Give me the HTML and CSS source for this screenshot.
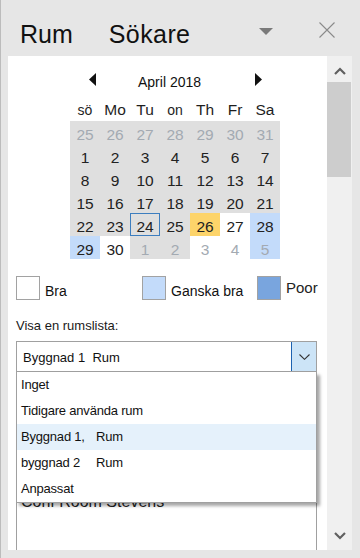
FILE: index.html
```html
<!DOCTYPE html>
<html lang="sv">
<head>
<meta charset="utf-8">
<title>Rum Sökare</title>
<link rel="stylesheet" href="styles.css">
</head>
<body>
<div class="app">
  <header class="top">
    <span class="title t1">Rum</span>
    <span class="title t2">Sökare</span>
    <svg class="menu-tri" width="14" height="7" viewBox="0 0 14 7"><polygon points="0,0 14,0 7,7" fill="#7a7a7a"/></svg>
    <svg class="close" width="16" height="16" viewBox="0 0 16 16"><path d="M0.5 0.5 L15.5 15.5 M15.5 0.5 L0.5 15.5" stroke="#8a8a8a" stroke-width="1.1" fill="none"/></svg>
  </header>
  <div class="main">
    <div class="panel">
      <div class="cal">
        <div class="cal-nav">
          <svg class="arrow arrow-l" width="7" height="13" viewBox="0 0 7 13"><polygon points="7,0 7,13 0,6.5" fill="#111"/></svg>
          <span class="cal-title">April 2018</span>
          <svg class="arrow arrow-r" width="7" height="13" viewBox="0 0 7 13"><polygon points="0,0 0,13 7,6.5" fill="#111"/></svg>
        </div>
        <div class="cal-grid">
          <span class="dh dh-s">sö</span><span class="dh">Mo</span><span class="dh">Tu</span><span class="dh dh-s">on</span><span class="dh">Th</span><span class="dh">Fr</span><span class="dh">Sa</span>
          <span class="d other">25</span><span class="d other">26</span><span class="d other">27</span><span class="d other">28</span><span class="d other">29</span><span class="d other">30</span><span class="d other">31</span>
          <span class="d">1</span><span class="d">2</span><span class="d">3</span><span class="d">4</span><span class="d">5</span><span class="d">6</span><span class="d">7</span>
          <span class="d">8</span><span class="d">9</span><span class="d">10</span><span class="d">11</span><span class="d">12</span><span class="d">13</span><span class="d">14</span>
          <span class="d">15</span><span class="d">16</span><span class="d">17</span><span class="d">18</span><span class="d">19</span><span class="d">20</span><span class="d">21</span>
          <span class="d">22</span><span class="d">23</span><span class="d today">24</span><span class="d">25</span><span class="d sel">26</span><span class="d free">27</span><span class="d fair">28</span>
          <span class="d fair">29</span><span class="d free">30</span><span class="d other">1</span><span class="d other">2</span><span class="d free other">3</span><span class="d free other">4</span><span class="d fair other">5</span>
        </div>
      </div>
      <div class="legend">
        <div class="lg-item"><span class="sw sw-good"></span><span class="lg-text">Bra</span></div>
        <div class="lg-item"><span class="sw sw-fair"></span><span class="lg-text">Ganska bra</span></div>
        <div class="lg-item"><span class="sw sw-poor"></span><span class="lg-text lg-poor">Poor</span></div>
      </div>
      <div class="label">Visa en rumslista:</div>
      <div class="combo-wrap">
        <div class="combo">
          <span class="combo-text">Byggnad 1  Rum</span>
          <span class="combo-btn"><svg width="11" height="6" viewBox="0 0 11 6"><path d="M0.5 0.5 L5.5 5.3 L10.5 0.5" stroke="#333" stroke-width="1.1" fill="none"/></svg></span>
        </div>
        <div class="listbox"><div class="lb-item">Conf Room Stevens</div></div>
        <ul class="dropdown">
          <li class="opt">Inget</li>
          <li class="opt">Tidigare använda rum</li>
          <li class="opt hl"><span class="o1">Byggnad 1,</span><span>Rum</span></li>
          <li class="opt"><span class="o1">byggnad 2</span><span>Rum</span></li>
          <li class="opt">Anpassat</li>
        </ul>
      </div>
    </div>
    <div class="scrollbar">
      <div class="sb-btn"><svg width="12" height="8" viewBox="0 0 12 8"><path d="M1 7 L6 2 L11 7" stroke="#606060" stroke-width="2.2" fill="none"/></svg></div>
      <div class="sb-thumb"></div>
      <div class="sb-space"></div>
      <div class="sb-btn sb-down"><svg width="12" height="8" viewBox="0 0 12 8"><path d="M1 1 L6 6 L11 1" stroke="#606060" stroke-width="2.2" fill="none"/></svg></div>
    </div>
  </div>
</div>
</body>
</html>
```
FILE: styles.css
```css
* { box-sizing: border-box; }
html, body { margin: 0; padding: 0; }
body {
  width: 360px;
  height: 558px;
  overflow: hidden;
  background: #e6e6e6;
  font-family: "Liberation Sans", Arial, sans-serif;
  color: #1a1a1a;
}
.app {
  width: 360px;
  height: 558px;
  border-left: 1px solid #bcbcbc;
  display: flex;
  flex-direction: column;
}
.top {
  height: 56px;
  display: flex;
  align-items: flex-start;
  flex: none;
}
.title {
  font-size: 25px;
  line-height: 28px;
  margin-top: 20px;
  color: #111;
}
.t1 { margin-left: 19px; }
.t2 { margin-left: 36px; letter-spacing: 0.4px; }
.menu-tri { margin-left: auto; margin-top: 28px; }
.close { margin-left: 46px; margin-right: 25px; margin-top: 22px; }

.main {
  display: flex;
  height: 494px;
  flex: none;
}
.panel {
  margin-left: 7px;
  width: 319px;
  height: 494px;
  background: #fff;
  padding-left: 8px;
  overflow: hidden;
  position: relative;
}
.cal {
  margin-left: 54px;
  margin-top: 12px;
  width: 210px;
}
.cal-nav {
  height: 26px;
  display: flex;
  align-items: flex-start;
}
.arrow { flex: none; margin-top: 5px; }
.arrow-l { margin-left: 19px; }
.cal-title {
  margin-left: 42px;
  font-size: 14px;
  line-height: 28px;
  height: 26px;
  color: #111;
}
.arrow-r { margin-left: auto; margin-right: 18px; }

.cal-grid {
  display: grid;
  grid-template-columns: repeat(7, 30px);
  grid-template-rows: 27px;
  grid-auto-rows: 23px;
}
.dh {
  height: 27px;
  line-height: 32px;
  font-size: 15.5px;
  text-align: center;
  color: #1e1e1e;
}
.dh-s { font-size: 14px; }
.d {
  height: 23px;
  line-height: 27px;
  font-size: 15.5px;
  text-align: center;
  background: #dfdfdf;
  color: #222;
}
.d.other { color: #a3aab2; }
.d.today { box-shadow: inset 0 0 0 1px #3d7ebf; }
.d.sel { background: #fdd46a; }
.d.free { background: #fff; }
.d.fair { background: #c3dbfa; }

.legend {
  margin-top: 17px;
  display: grid;
  grid-template-columns: 126px 115px auto;
  height: 24px;
}
.lg-item { display: flex; align-items: flex-start; }
.sw {
  width: 24px;
  height: 24px;
  border: 1px solid #a2a2a2;
  flex: none;
}
.sw-good { background: #fff; }
.sw-fair { background: #c3dbfa; }
.sw-poor { background: #79a5de; }
.lg-text {
  margin-left: 5px;
  font-size: 14px;
  line-height: 16px;
  margin-top: 7px;
  color: #111;
}
.lg-poor { font-size: 15px; margin-top: 4px; color: #222; }

.label {
  margin-top: 18px;
  font-size: 13px;
  line-height: 16px;
  color: #1a1a1a;
}
.combo-wrap {
  margin-top: 7px;
  width: 301px;
  position: relative;
}
.combo {
  height: 31px;
  border: 1px solid #a0a0a0;
  display: flex;
  background: #fff;
}
.combo-text {
  flex: 1;
  white-space: pre;
  font-size: 13px;
  line-height: 31px;
  padding-left: 6px;
  color: #111;
}
.combo-btn {
  width: 25px;
  border-left: 1px solid #1d62b0;
  background: #cce4f7;
  display: flex;
  align-items: center;
  justify-content: center;
}
.listbox {
  margin-top: 8px;
  height: 200px;
  border: 1px solid #a0a0a0;
  border-bottom: none;
  padding-top: 109px;
}
.lb-item {
  font-size: 16px;
  line-height: 24px;
  padding-left: 4px;
  color: #222;
}
.dropdown {
  position: absolute;
  left: 0;
  top: 31px;
  width: 301px;
  height: 131px;
  margin: 0;
  padding: 0;
  list-style: none;
  background: #fff;
  border: 1px solid #a0a0a0;
  border-top: none;
  box-shadow: 3px 3px 3px rgba(0, 0, 0, 0.35);
}
.opt {
  height: 26px;
  line-height: 26px;
  padding-left: 4px;
  font-size: 13px;
  letter-spacing: -0.2px;
  color: #111;
  display: flex;
}
.opt.hl { background: #e5f1fb; }
.o1 { width: 75px; flex: none; }

.scrollbar {
  width: 25px;
  height: 494px;
  background: #f0f0f0;
  display: flex;
  flex-direction: column;
  flex: none;
}
.sb-btn {
  height: 26px;
  display: flex;
  align-items: center;
  justify-content: center;
  flex: none;
}
.sb-btn svg { margin-top: 3px; }
.sb-thumb {
  height: 95px;
  margin-right: 1px;
  background: #cdcdcd;
  flex: none;
}
.sb-space { flex: 1; }
.sb-down { height: 28px; }
.sb-down svg { margin-top: 0; }
```
